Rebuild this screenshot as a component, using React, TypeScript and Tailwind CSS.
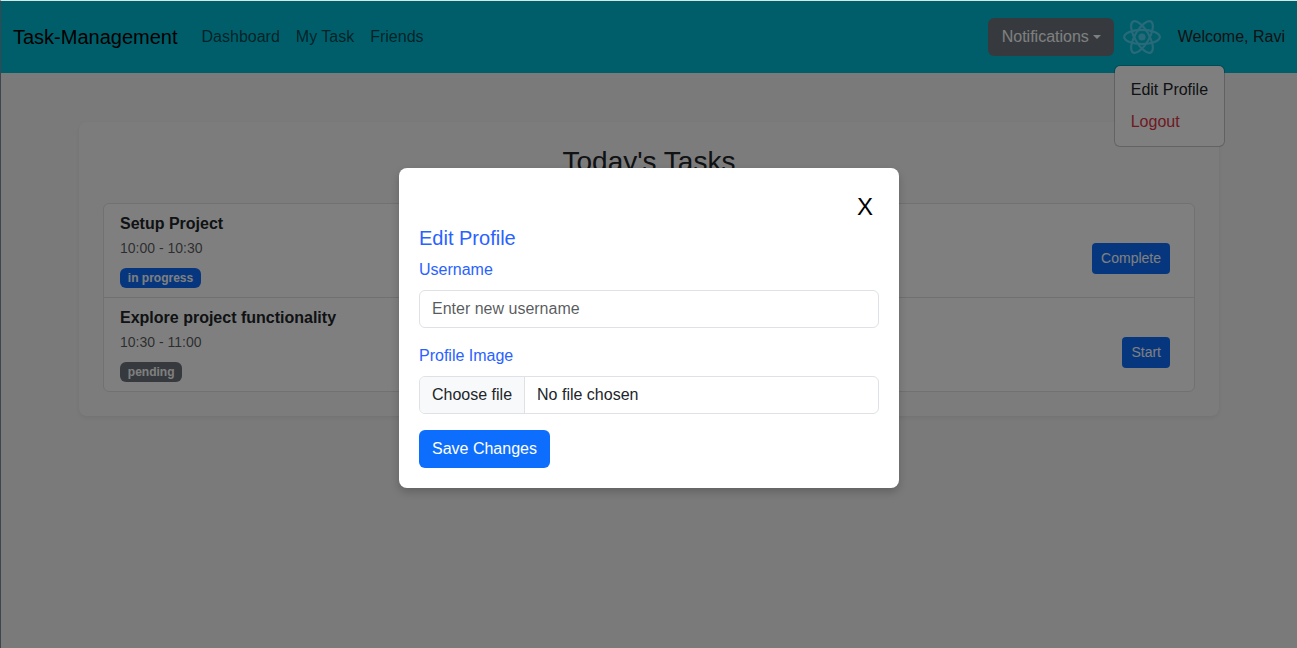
import React from "react";

type Task = {
  title: string;
  time: string;
  status: string;
  badge: string;
  action: string;
};

const tasks: Task[] = [
  { title: "Setup Project", time: "10:00 - 10:30", status: "in progress", badge: "bg-[#0d6efd]", action: "Complete" },
  { title: "Explore project functionality", time: "10:30 - 11:00", status: "pending", badge: "bg-[#6c757d]", action: "Start" },
];

function ReactLogo() {
  return (
    <svg viewBox="-11.5 -10.23 23 20.46" className="h-[34px] w-[38px]" fill="none" stroke="#61dafb" strokeWidth="1.3" opacity="0.85">
      <circle r="2.15" fill="#61dafb" stroke="none" />
      <ellipse rx="10.8" ry="4.3" />
      <ellipse rx="10.8" ry="4.3" transform="rotate(60)" />
      <ellipse rx="10.8" ry="4.3" transform="rotate(120)" />
    </svg>
  );
}

function Navbar() {
  return (
    <nav className="flex h-[72px] items-center bg-[#00bcd4] px-3">
      <a className="mr-6 text-xl leading-[30px] text-black">Task-Management</a>
      <div className="flex gap-4 text-black/65">
        <a>Dashboard</a>
        <a>My Task</a>
        <a>Friends</a>
      </div>
      <div className="ml-auto flex items-center">
        <button className="flex h-[38px] w-[126px] items-center rounded-md bg-[#6c757d] pl-3.5 text-white">
          Notifications
          <span className="mb-px ml-1 border-x-[4.8px] border-t-[4.8px] border-x-transparent border-t-white" />
        </button>
        <div className="relative ml-2 flex h-10 w-10 items-center justify-center">
          <ReactLogo />
          <div className="absolute top-[48px] -left-2 flex h-[82px] w-[111px] flex-col rounded-md border border-black/20 bg-white bg-clip-padding py-2">
            <a className="px-4 py-1 whitespace-nowrap">Edit Profile</a>
            <a className="px-4 py-1 text-[#dc3545]">Logout</a>
          </div>
        </div>
        <span className="ml-4">Welcome, Ravi</span>
      </div>
    </nav>
  );
}

function TaskList() {
  return (
    <section className="mx-auto mt-[49px] h-[294px] w-[1140px] rounded-lg bg-[#f9f9f9] p-6 shadow-[0_2px_4px_rgba(0,0,0,0.06)]">
      <h2 className="mb-6 h-[33px] text-center text-[28px] leading-8">Today's Tasks</h2>
      <ul className="divide-y divide-[#dee2e6] rounded-md border border-[#dee2e6] bg-white">
        {tasks.map((task) => (
          <li key={task.title} className="flex justify-between pt-2 pr-6 pl-4">
            <div className="h-[85px]">
              <h5 className="font-bold">{task.title}</h5>
              <p className="mb-2 text-sm leading-6 text-[#212529]/75">{task.time}</p>
              <span className={`block h-5 w-fit rounded-md px-[7.8px] text-xs leading-5 font-bold text-white ${task.badge}`}>
                {task.status}
              </span>
            </div>
            <button className="mt-[31px] h-[31px] rounded bg-[#0d6efd] px-[9px] text-sm leading-[21px] text-white">
              {task.action}
            </button>
          </li>
        ))}
      </ul>
    </section>
  );
}

function EditProfileModal() {
  return (
    <div className="flex h-80 w-[500px] flex-col rounded-lg bg-white p-5 shadow-[0_4px_8px_rgba(0,0,0,0.2)]">
      <button className="h-[38px] self-end px-1.5 text-2xl text-black">X</button>
      <h5 className="mb-2 text-xl leading-6 text-[#2962ff]">Edit Profile</h5>
      <label className="mb-2 text-[#2962ff]">Username</label>
      <input
        type="text"
        placeholder="Enter new username"
        className="mb-4 h-[38px] rounded-md border border-[#dee2e6] px-3 placeholder:text-[#212529]/75"
      />
      <label className="mb-2 text-[#2962ff]">Profile Image</label>
      <div className="mb-4 flex h-[38px] overflow-hidden rounded-md border border-[#dee2e6] leading-9">
        <span className="border-r border-[#dee2e6] bg-[#f8f9fa] px-3">Choose file</span>
        <span className="px-3">No file chosen</span>
      </div>
      <button className="h-[38px] self-start rounded-md bg-[#0d6efd] px-[13px] text-white">Save Changes</button>
    </div>
  );
}

export default function App() {
  return (
    <div className="relative h-[648px] w-full overflow-hidden border-t border-l border-t-[#d3e8e5] border-l-[#3c4650] bg-[#f4f4f4] font-['Liberation_Sans',Arial,sans-serif] text-base text-[#212529]">
      <Navbar />
      <TaskList />
      <div className="absolute inset-0 z-10 flex justify-center bg-black/50 pt-[167px]">
        <EditProfileModal />
      </div>
    </div>
  );
}
